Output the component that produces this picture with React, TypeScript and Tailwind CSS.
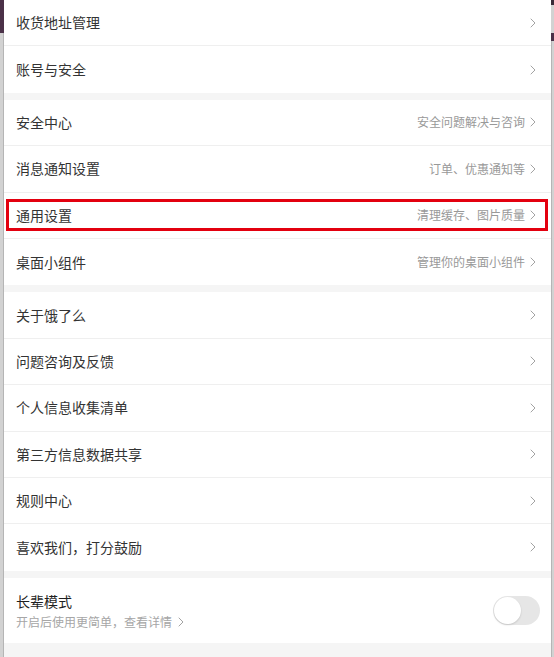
import React from "react";

type Item = { label: string; hint?: string; highlight?: boolean };

const sections: Item[][] = [
    [{ label: "收货地址管理" }, { label: "账号与安全" }],
    [
        { label: "安全中心", hint: "安全问题解决与咨询" },
        { label: "消息通知设置", hint: "订单、优惠通知等" },
        { label: "通用设置", hint: "清理缓存、图片质量", highlight: true },
        { label: "桌面小组件", hint: "管理你的桌面小组件" },
    ],
    [
        { label: "关于饿了么" },
        { label: "问题咨询及反馈" },
        { label: "个人信息收集清单" },
        { label: "第三方信息数据共享" },
        { label: "规则中心" },
        { label: "喜欢我们，打分鼓励" },
    ],
];

function Chevron() {
    return (
        <svg width="6" height="10" viewBox="0 0 6 10" fill="none" aria-hidden="true">
            <path d="M1 1l4 4-4 4" stroke="#a3a3a3" strokeWidth="1" strokeLinecap="round" strokeLinejoin="round" />
        </svg>
    );
}

function Row({ item, last }: { item: Item; last: boolean }) {
    return (
        <div
            className={
                "relative h-[46.4px] flex items-center justify-between pl-[12px] pr-[15px] bg-white " +
                (last ? "" : "border-b border-[#efefef]")
            }
        >
            <span className="text-[14px] text-[#333333]">{item.label}</span>
            <div className="flex items-center gap-[5px]">
                {item.hint && <span className="text-[12px] text-[#999999]">{item.hint}</span>}
                <Chevron />
            </div>

            {/* highlight frame */}
            {item.highlight && (
                <div className="absolute top-[6px] bottom-[7px] left-[2px] right-[3px] border-[3px] border-[#e3000f]"></div>
            )}
        </div>
    );
}

export default function App() {
    return (
        <div className="w-[554px] h-[657px] flex overflow-hidden bg-[#f5f5f5] font-['Noto_Sans_CJK_SC',sans-serif]">
            {/* page behind, left edge */}
            <div className="w-[4px] flex flex-col">
                <div className="h-[33px] bg-[#4b3148]"></div>
                <div className="flex-1 bg-[#d2d2d2] border-r border-[#b5b5b5]"></div>
            </div>

            <div className="flex-1 flex flex-col gap-[7px]">
                {sections.map((items, i) => (
                    <div key={i} className="flex flex-col">
                        {items.map((item, j) => (
                            <Row key={item.label} item={item} last={j === items.length - 1} />
                        ))}
                    </div>
                ))}

                {/* elder mode */}
                <div className="h-[65px] flex items-center justify-between pl-[12px] pr-[11px] bg-white">
                    <div className="flex flex-col gap-[3px]">
                        <span className="text-[14px] leading-[20px] text-[#1f1f1f]">长辈模式</span>
                        <div className="flex items-center gap-[6px]">
                            <span className="text-[12px] leading-[16px] text-[#a6a6a6]">开启后使用更简单，查看详情</span>
                            <Chevron />
                        </div>
                    </div>
                    <div className="w-[47px] h-[29px] rounded-full bg-[#e6e6e6] p-[1px] flex items-center">
                        <div className="w-[27px] h-[27px] rounded-full bg-white shadow-[0_1px_2px_rgba(0,0,0,0.15)]"></div>
                    </div>
                </div>
            </div>

            {/* page behind, right edge */}
            <div className="w-[3px] flex flex-col">
                <div className="h-[5px] bg-[#3a2a38]"></div>
                <div className="h-[28px] bg-[#d2d2d2]"></div>
                <div className="h-[8px] bg-[#4b3148]"></div>
                <div className="flex-1 bg-[#d2d2d2] border-l border-[#b5b5b5]"></div>
            </div>
        </div>
    );
}
